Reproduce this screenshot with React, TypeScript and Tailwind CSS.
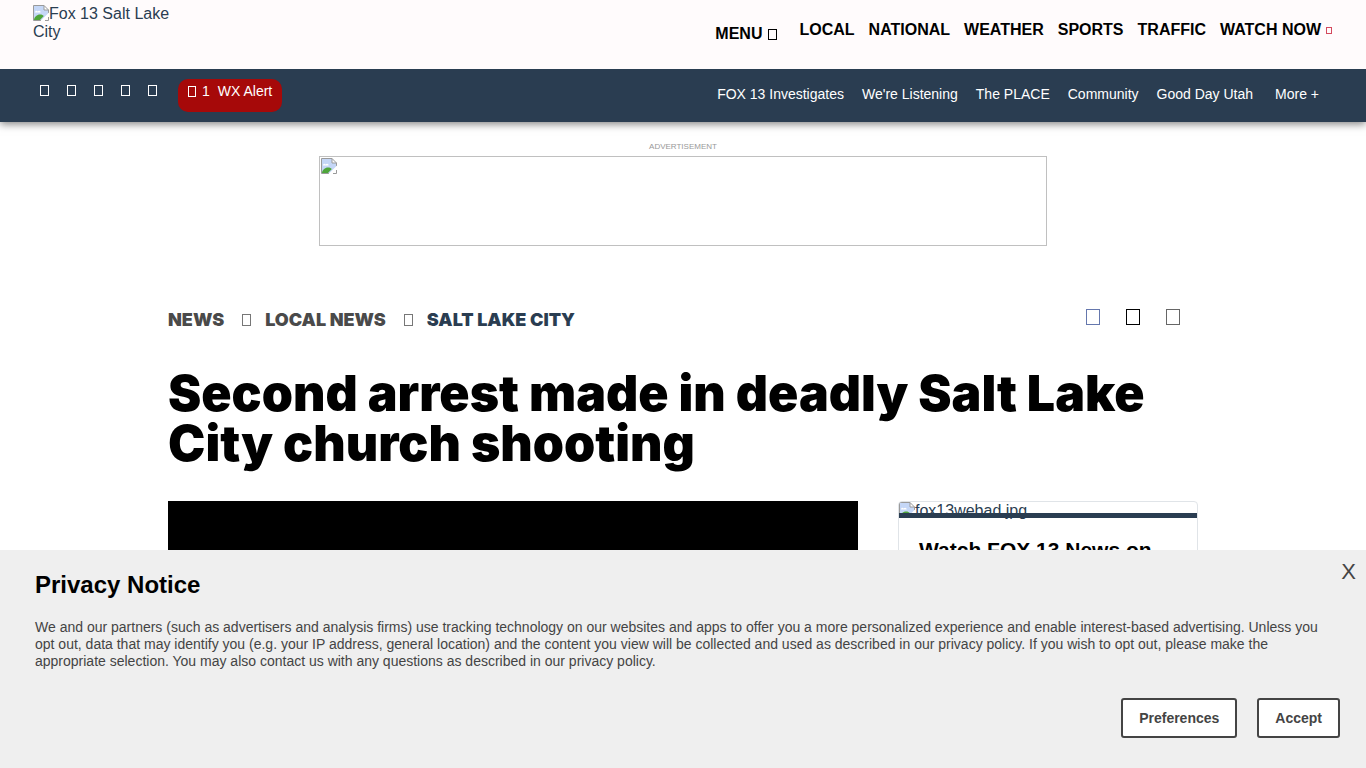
import React from "react";

const mainLinks = ["LOCAL", "NATIONAL", "WEATHER", "SPORTS", "TRAFFIC"];
const subLinks = ["FOX 13 Investigates", "We're Listening", "The PLACE", "Community", "Good Day Utah"];
const socials = ["Facebook", "Twitter", "Instagram", "YouTube", "Search"];

/* Hollow box shown where an icon-font glyph is missing. */
function Glyph({ className }: { className: string }) {
  return <span aria-hidden="true" className={`inline-block shrink-0 border ${className}`} />;
}

function BrokenImage({ className = "" }: { className?: string }) {
  return (
    <svg viewBox="0 0 16 16" aria-hidden="true" className={`h-4 w-4 shrink-0 ${className}`}>
      <path d="M.5.5h10.5l4.5 4.500v4L8.500 15.500H.5z" fill="#c5d7f7" />
      <path d="M2 7.500c0-2 2-2.500 2.500-1C6 5 8 6 7.500 7.500z" fill="#fff" />
      <path d="M1 15c0-3 3-5.500 6-5.500 2 0 3 .7 3.800 1.500L7 15z" fill="#4ea53a" />
      <path d="M11 .5v4.500h4.500z" fill="#fff" />
      <path d="M8 15.500H.5V.5H11l4.500 4.500v3.500M11 .5v4.500h4.500M12 15.500h3.500V12" fill="none" stroke="#9a9a9a" />
      <path d="M16 7.500 7.500 16h3L16 10.500z" fill="#fff" />
    </svg>
  );
}

export default function App() {
  return (
    <div className="min-h-screen bg-white font-['Liberation_Sans',Arial,sans-serif] text-black">
      <header className="relative shadow-[0_2px_8px_rgba(0,0,0,0.5)]">
        <div className="flex h-[69px] items-start justify-between bg-[#fffbfc] pl-[33px] pr-[34px]">
          <a href="#" className="mt-[5px] block w-[140px] text-base leading-[18px] text-[#2a3d51]">
            <BrokenImage className="float-left" />
            Fox 13 Salt Lake City
          </a>
          <nav aria-label="Main" className="mt-[21px] flex items-start gap-[14px] text-base leading-[18px] font-bold">
            <button className="mt-1 mr-2 flex items-center gap-[6px]">
              MENU
              <Glyph className="h-[11px] w-[9px] border-black" />
            </button>
            {mainLinks.map((label) => (
              <a key={label} href="#">{label}</a>
            ))}
            <a href="#" className="flex items-center gap-[5px]">
              WATCH NOW
              <Glyph className="h-[7px] w-[6px] border-[#d4495d]" />
            </a>
          </nav>
        </div>

        <div className="flex h-[53px] items-start justify-between bg-[#2a3d51] pl-10 pr-[47px] text-sm leading-4 text-white">
          <div className="flex items-start">
            <div className="mt-4 flex gap-[18px]">
              {socials.map((name) => (
                <a key={name} href="#" aria-label={name} className="flex">
                  <Glyph className="h-[11px] w-[9px] border-white" />
                </a>
              ))}
            </div>
            <a href="#" className="mt-[10px] ml-[21px] flex h-[33px] items-start rounded-[10px] bg-[#a60909] px-[10px] pt-1">
              <Glyph className="mt-[3px] mr-[6px] h-[11px] w-2 border-white" />
              <span className="mr-2">1</span>
              <span>WX Alert</span>
            </a>
          </div>
          <nav aria-label="Sections" className="mt-[17px] flex gap-[18px]">
            {subLinks.map((label) => (
              <a key={label} href="#">{label}</a>
            ))}
            <button className="ml-1">More +</button>
          </nav>
        </div>
      </header>

      <aside className="mt-5 flex flex-col items-center">
        <p className="pt-px text-[8px] leading-2 text-[#999999]">ADVERTISEMENT</p>
        <a href="#" aria-label="Advertisement" className="mt-[5px] block h-[90px] w-full max-w-[728px] border border-[#c0c0c0] p-px">
          <BrokenImage />
        </a>
      </aside>

      <main className="mx-auto mt-[61px] w-full max-w-[1030px]">
        <div className="flex items-start justify-between">
          <nav aria-label="Breadcrumb" className="mt-1 flex items-center gap-[14px] font-['Inter',sans-serif] text-lg leading-[18px] font-black text-[#4a4a4a]">
            <a href="#">NEWS</a>
            <Glyph className="ml-1 h-3 w-[9px] border-[#777777]" />
            <a href="#">LOCAL NEWS</a>
            <Glyph className="ml-1 h-3 w-[9px] border-[#777777]" />
            <a href="#" className="text-[#2a3d51]">SALT LAKE CITY</a>
          </nav>
          <div className="mt-px mr-[18px] flex gap-[26px]">
            <a href="#" aria-label="Share on Facebook"><Glyph className="h-4 w-[14px] border-[#6577ad]" /></a>
            <a href="#" aria-label="Share on X"><Glyph className="h-4 w-[14px] border-black" /></a>
            <a href="#" aria-label="Share by email"><Glyph className="h-4 w-[14px] border-[#666666]" /></a>
          </div>
        </div>

        <h1 className="mt-9 font-['Inter',sans-serif] text-[50px] leading-[50px] font-black">
          Second arrest made in deadly Salt Lake City church shooting
        </h1>

        <div className="mt-[33px] flex items-start gap-10">
          <div className="h-[240px] flex-1 bg-black" />
          <aside className="h-[240px] w-[300px] overflow-hidden rounded border border-[#e0e4e8]">
            <a href="#" className="flex h-[11px] text-base leading-[18px] text-[#2a3d51]">
              <BrokenImage />
              <span>fox13webad.jpg</span>
            </a>
            <div className="relative h-[5px] bg-[#2a3d51]" />
            <h2 className="mt-5 px-5 text-[21px] leading-6 font-bold">Watch FOX 13 News on</h2>
          </aside>
        </div>
      </main>

      <section aria-labelledby="privacy-title" className="fixed inset-x-0 bottom-0 bg-[#efefef] px-[35px] pt-[21px] pb-[30px] text-[#444444]">
        <button aria-label="Close" className="absolute top-[10px] right-[10px] text-[22px] leading-6">X</button>
        <h2 id="privacy-title" className="text-2xl leading-7 font-bold text-black">Privacy Notice</h2>
        <p className="mt-5 text-sm leading-[17px]">
          We and our partners (such as advertisers and analysis firms) use tracking technology on our websites and apps to offer you a more personalized experience and enable interest-based advertising. Unless you opt out, data that may identify you (e.g. your IP address, general location) and the content you view will be collected and used as described in our privacy policy. If you wish to opt out, please make the appropriate selection. You may also contact us with any questions as described in our privacy policy.
        </p>
        <div className="mt-7 -mr-[9px] flex justify-end gap-5 text-sm font-bold">
          <button className="h-10 rounded-[3px] border-2 border-[#444444] bg-white px-4">Preferences</button>
          <button className="h-10 rounded-[3px] border-2 border-[#444444] bg-white px-4">Accept</button>
        </div>
      </section>
    </div>
  );
}
